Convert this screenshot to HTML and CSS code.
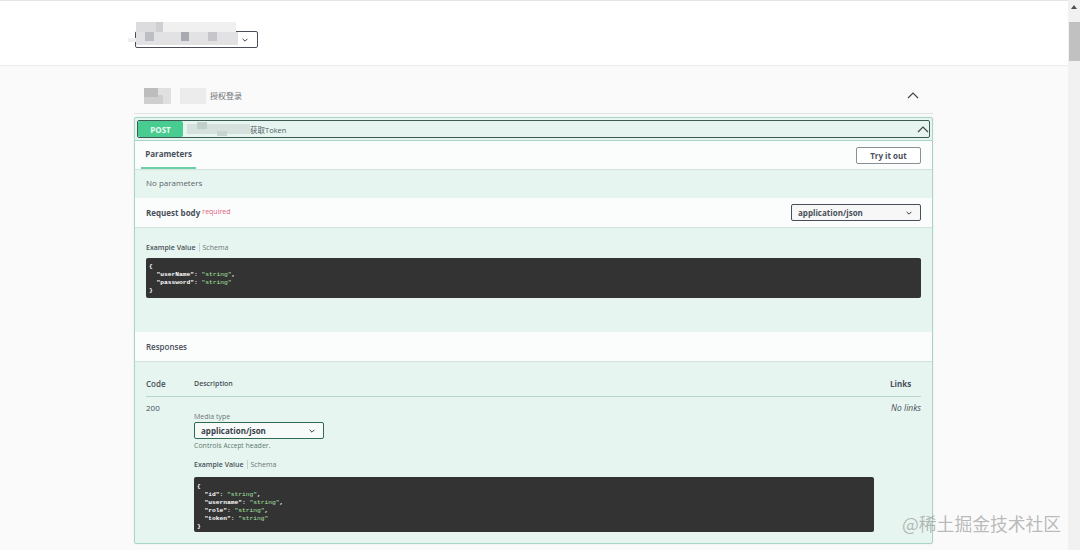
FILE: index.html
```html
<!DOCTYPE html>
<html lang="zh">
<head>
<meta charset="utf-8">
<title>Swagger UI</title>
<link rel="stylesheet" href="styles.css">
</head>
<body>
<div class="page">
  <main class="main">
    <header class="topbar">
      <div class="topbar-inner">
        <div class="spec-select">
          <span class="blur blur-spec"></span>
          <svg class="chev-s" viewBox="0 0 10 6"><path d="M1 1l4 4 4-4" /></svg>
        </div>
      </div>
    </header>
    <div class="content">
      <div class="tag">
        <div class="tag-title"><span class="blur blur-tag"></span><span>授权登录</span></div>
        <svg class="chev-up" viewBox="0 0 12 7"><path d="M1 6l5-5 5 5" /></svg>
      </div>
      <section class="op">
        <div class="summary">
          <div class="summary-inner">
            <span class="method">POST</span>
            <span class="blur blur-path"></span>
            <span class="summary-text">获取Token</span>
            <svg class="chev-up chev-op" viewBox="0 0 12 7"><path d="M1 6l5-5 5 5" /></svg>
          </div>
        </div>
        <div class="sec-head params-head">
          <span class="tab">Parameters</span>
          <button class="try">Try it out</button>
        </div>
        <div class="no-params">No parameters</div>
        <div class="sec-head body-head">
          <div class="body-title">Request body <sup class="req">required</sup></div>
          <div class="select sel-body"><span>application/json</span><svg class="chev-s" viewBox="0 0 10 6"><path d="M1 1l4 4 4-4" /></svg></div>
        </div>
        <div class="body-wrap">
          <div class="tabs"><b>Example Value</b><i></i><span>Schema</span></div>
<pre class="code">{
  <b>"userName"</b>: <em>"string"</em>,
  <b>"password"</b>: <em>"string"</em>
}</pre>
        </div>
        <div class="sec-head resp-head">Responses</div>
        <div class="resp">
          <div class="resp-row resp-titles"><b class="c-code">Code</b><b class="c-desc">Description</b><b class="c-links">Links</b></div>
          <div class="resp-row resp-200">
            <div class="c-code">200</div>
            <div class="c-desc">
              <div class="media-label">Media type</div>
              <div class="select sel-media"><span>application/json</span><svg class="chev-s" viewBox="0 0 10 6"><path d="M1 1l4 4 4-4" /></svg></div>
              <div class="media-note">Controls <small>Accept</small> header.</div>
              <div class="tabs tabs-resp"><b>Example Value</b><i></i><span>Schema</span></div>
<pre class="code code-resp">{
  <b>"id"</b>: <em>"string"</em>,
  <b>"username"</b>: <em>"string"</em>,
  <b>"role"</b>: <em>"string"</em>,
  <b>"token"</b>: <em>"string"</em>
}</pre>
            </div>
            <div class="c-links no-links">No links</div>
          </div>
        </div>
      </section>
    </div>
  </main>
  <aside class="scrollbar">
    <svg class="sb-arrow" viewBox="0 0 6 4"><path d="M3 0l3 4H0z" /></svg>
    <div class="sb-thumb"></div>
  </aside>
</div>
<div class="watermark">@稀土掘金技术社区</div>
</body>
</html>
```
FILE: styles.css
```css
* { box-sizing: border-box; }
html, body { margin: 0; height: 550px; overflow: hidden; }
body { font-family: "Open Sans", "Noto Sans CJK SC", sans-serif; color: #4a4f5a; background: #fafafa; position: relative; }
.page { display: flex; height: 550px; }
.main { flex: 1; min-width: 0; }

.topbar { height: 66px; background: #fff; border-top: 1px solid #e4e4e4; border-bottom: 1px solid #ececec; padding-left: 135px; }
.topbar-inner { padding-top: 30px; }
.spec-select { width: 123px; height: 17px; border: 1px solid #4a4e58; border-radius: 2px; background: #fff; position: relative; display: flex; justify-content: flex-end; align-items: center; padding-right: 9px; }
.blur { display: inline-block; flex: none; }
.blur-spec { position: absolute; left: -8px; top: -10px; width: 110px; height: 23px;
  background:
    linear-gradient(#bdbdc4, #bdbdc4) 17px 10px / 9px 9px no-repeat,
    linear-gradient(#a9a9b0, #a9a9b0) 53px 10px / 8px 9px no-repeat,
    linear-gradient(#c6c6ca, #c6c6ca) 80px 10px / 9px 9px no-repeat,
    linear-gradient(#cfcfd3, #cfcfd3) 28px 0 / 7px 10px no-repeat,
    linear-gradient(#dcdcde, #dcdcde) 8px 0 / 20px 10px no-repeat,
    linear-gradient(#f0f0f1, #f0f0f1) 8px 0 / 100px 10px no-repeat,
    linear-gradient(#e2e2e4, #e2e2e4) 8px 10px / 102px 13px no-repeat,
    linear-gradient(#efeff0, #efeff0) 0 16px / 110px 4px no-repeat; }
.chev-s { width: 6px; height: 4px; fill: none; stroke: #333; stroke-width: 1.6; flex: none; }

.content { padding: 0 135px 0 134px; }
.tag { height: 48px; border-bottom: 1px solid #dfe1e1; display: flex; align-items: center; justify-content: space-between; padding: 20px 14px 8px 10px; font-size: 8px; color: #6f7278; }
.tag-title { display: flex; align-items: center; }
.blur-tag { width: 66px; height: 16px;
  background:
    linear-gradient(#bdbdbd, #bdbdbd) 0 0 / 14px 9px no-repeat,
    linear-gradient(#cfcfcf, #cfcfcf) 0 7px / 19px 9px no-repeat,
    linear-gradient(#e0e0e0, #e0e0e0) 14px 0 / 13px 16px no-repeat,
    linear-gradient(#ececec, #ececec) 36px 0 / 26px 16px no-repeat; }
.chev-up { width: 12px; height: 7px; fill: none; stroke: #444; stroke-width: 1.2; flex: none; }

.op { margin-top: 3px; height: 427px; border: 1px solid #a9d6c4; border-radius: 2px; background: #e6f5ef; box-shadow: 0 0 2px rgba(0,0,0,.08); }
.summary { height: 23px; padding: 2px 2px 0 2px; border-bottom: 1px solid #a9d6c4; }
.summary-inner { height: 18px; border: 1px solid #3e5a55; border-radius: 2px; display: flex; align-items: center; position: relative; font-size: 7.5px; color: #555e68; }
.method { width: 45px; height: 16px; background: #49cc90; border-radius: 2px; color: #eafaf3; font-size: 8px; font-weight: 700; display: flex; align-items: center; justify-content: center; margin-right: 4px; }
.blur-path { width: 63px; height: 14px;
  background:
    linear-gradient(#bfcfc9, #bfcfc9) 10px 0 / 10px 7px no-repeat,
    linear-gradient(#c6d5d0, #c6d5d0) 30px 9px / 10px 5px no-repeat,
    linear-gradient(#d6e0dd, #d6e0dd) 0 2px / 63px 10px no-repeat; }
.chev-op { position: absolute; right: 0; top: 5px; }

.sec-head { background: rgba(255,255,255,.82); display: flex; align-items: center; justify-content: space-between; box-shadow: 0 1px 1px rgba(0,0,0,.07); }
.params-head { height: 28px; padding: 0 11px 0 6px; }
.tab { align-self: stretch; width: 55px; font-size: 8px; font-weight: 700; display: flex; align-items: center; justify-content: center; border-bottom: 2px solid #6fcfa6; padding-bottom: 2px; }
.try { width: 65px; height: 17px; padding: 0; border: 1px solid #8a8f96; border-radius: 2px; background: #fff; font: 700 8px "Open Sans", sans-serif; color: #4c505c; }
.no-params { height: 29px; padding: 0 0 2px 11px; display: flex; align-items: center; font-size: 8px; color: #5c636c; }
.body-head { height: 29px; padding: 0 11px; }
.body-title { font-size: 8px; font-weight: 700; }
.req { font-size: 7px; font-weight: 400; color: #e0607a; position: relative; top: -2px; vertical-align: baseline; }
.select { height: 17px; border: 1px solid #4a4e58; border-radius: 2px; background: #f7f7f7; display: flex; justify-content: space-between; align-items: center; padding: 0 8px 0 6px; font-size: 8px; font-weight: 700; color: #4a4f5a; }
.sel-body { width: 130px; }
.body-wrap { height: 105px; padding: 15px 11px 0; }
.tabs { display: flex; align-items: center; font-size: 7px; height: 10px; color: #6f747c; }
.tabs b { color: #4a4f5a; font-weight: 600; }
.tabs i { width: 1px; height: 9px; background: #c8d4d0; margin: 0 3px; }
.code { margin: 6px 0 0; height: 40px; padding: 5px 3px 0; background: #333; border-radius: 2px; color: #fff; font: 700 6.25px/8px "Liberation Mono", monospace; overflow: hidden; }
.code b { font-weight: 700; color: #fff; }
.code em { font-style: normal; font-weight: 400; color: #a6e3a1; }
.resp-head { height: 29px; padding: 0 11px; font-size: 8px; font-weight: 600; justify-content: flex-start; }
.resp { padding: 0 11px; }
.resp-row { display: flex; }
.resp-titles { height: 36px; align-items: center; padding-top: 10px; border-bottom: 1px solid #bcd5cc; font-size: 7px; }
.resp-titles b { font-weight: 600; }
.resp-titles .c-code { font-size: 8px; }
.resp-titles .c-links { text-align: left; font-size: 8px; font-weight: 700; }
.c-code { width: 48px; flex: none; }
.c-desc { flex: 1; min-width: 0; }
.c-links { width: 31px; flex: none; margin-left: 16px; text-align: right; }
.resp-200 { padding-top: 5px; font-size: 8px; }
.no-links { font-style: italic; font-weight: 400; font-size: 8.5px; margin-left: 15px; width: 32px; white-space: nowrap; }
.media-label { margin-top: 10px; font-size: 7px; line-height: 10px; color: #6f747c; }
.sel-media { width: 130px; height: 17px; border-color: #2f6b50; background: #f6fbf9; color: #3a3e48; }
.media-note { margin-top: 2px; font-size: 7px; line-height: 10px; color: #5f7a70; }
.media-note small { font-size: 6.5px; }
.tabs-resp { margin-top: 8px; }
.code-resp { margin-top: 8px; height: 55px; padding: 6px 3px 0; width: 680px; }

.scrollbar { width: 12px; flex: none; background: #f1f1f1; position: relative; }
.sb-arrow { position: absolute; left: 3px; top: 5px; width: 6px; height: 4px; fill: #505050; }
.sb-thumb { position: absolute; left: 1px; right: 0; top: 22px; height: 39px; background: #c1c1c1; }
.watermark { position: absolute; left: 902px; top: 511px; font: 400 17.8px/24px "Noto Sans CJK SC", sans-serif; color: rgba(130,130,130,.55); white-space: nowrap; }
```
